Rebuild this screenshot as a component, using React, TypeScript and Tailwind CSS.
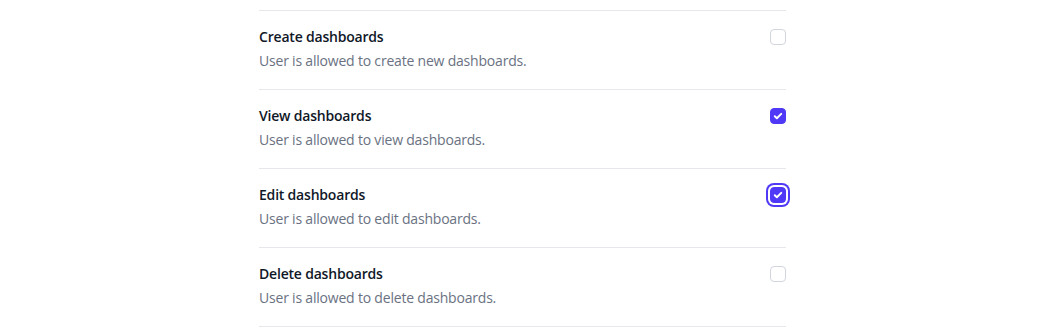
import { useState } from "react";

const permissions = [
  { id: "create", title: "Create dashboards", desc: "User is allowed to create new dashboards.", checked: false },
  { id: "view", title: "View dashboards", desc: "User is allowed to view dashboards.", checked: true },
  { id: "edit", title: "Edit dashboards", desc: "User is allowed to edit dashboards.", checked: true, focus: true },
  { id: "delete", title: "Delete dashboards", desc: "User is allowed to delete dashboards.", checked: false },
];

function Checkbox({ checked, focus, onChange }: { checked: boolean; focus?: boolean; onChange: () => void }) {
  return (
    <button
      type="button"
      onClick={onChange}
      className={`flex h-4 w-4 items-center justify-center rounded border ${
        checked ? "border-indigo-600 bg-indigo-600" : "border-gray-300 bg-white"
      } ${focus ? "ring-2 ring-indigo-600 ring-offset-2" : ""}`}
    >
      {checked && (
        <svg viewBox="0 0 16 16" className="h-4 w-4 text-white" fill="none">
          <path d="M4.3 8.3l2.4 2.3 5-5.1" stroke="currentColor" strokeWidth="2.2" strokeLinecap="round" strokeLinejoin="round" />
        </svg>
      )}
    </button>
  );
}

export default function App() {
  const [items, setItems] = useState(permissions);

  return (
    <div className="min-h-[332px] bg-white pt-[10px] font-['Open_Sans',sans-serif] tracking-[-0.2px]">
      <div className="ml-[259px] w-[527px] divide-y divide-gray-200 border-y border-gray-200">
        {items.map((p) => (
          <div key={p.id} className="flex items-start justify-between pt-4 pb-[18px]">
            <div>
              <p className="text-sm leading-5 font-semibold text-gray-900">{p.title}</p>
              <p className="mt-1 text-sm leading-5 text-gray-500">{p.desc}</p>
            </div>
            <div className="mt-[2px]">
              <Checkbox
                checked={p.checked}
                focus={p.focus}
                onChange={() => setItems((all) => all.map((x) => (x.id === p.id ? { ...x, checked: !x.checked } : x)))}
              />
            </div>
          </div>
        ))}
      </div>
    </div>
  );
}
